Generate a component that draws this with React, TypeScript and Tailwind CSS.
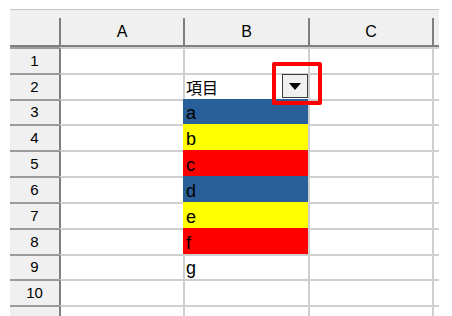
import React from 'react';

const rows = [
  { n: 1, h: 'h-[26px]', text: '', bg: '' },
  { n: 2, h: 'h-[26px]', text: '項目', bg: '' },
  { n: 3, h: 'h-[25px]', text: 'a', bg: 'bg-[#2a6099] border-[#2a6099]' },
  { n: 4, h: 'h-[26px]', text: 'b', bg: 'bg-[#ffff00] border-[#ffff00]' },
  { n: 5, h: 'h-[26px]', text: 'c', bg: 'bg-[#ff0000] border-[#ff0000]' },
  { n: 6, h: 'h-[26px]', text: 'd', bg: 'bg-[#2a6099] border-[#2a6099]' },
  { n: 7, h: 'h-[26px]', text: 'e', bg: 'bg-[#ffff00] border-[#ffff00]' },
  { n: 8, h: 'h-[26px]', text: 'f', bg: 'bg-[#ff0000] border-[#ff0000]' },
  { n: 9, h: 'h-[25px]', text: 'g', bg: '' },
  { n: 10, h: 'h-[26px]', text: '', bg: '' },
  { n: 11, h: 'h-[26px]', text: '', bg: '' },
];

function ColHeader({ label, width }: { label: string; width: string }) {
  return (
    <div className={`flex h-full ${width}`}>
      <div className="w-[2px] self-end h-[27px] bg-[#7f7f7f]" />
      <div className="flex-1 flex items-center justify-center pt-[8px]">{label}</div>
    </div>
  );
}

// autofilter dropdown with the red highlight frame drawn over it
function FilterButton() {
  return (
    <>
      <div className="absolute right-0 top-[-1px] z-10 flex items-center justify-center w-[26px] h-[24px] border border-[#3c3c3c] bg-[#f0f0f0]">
        <svg width="12" height="7" viewBox="0 0 12 7">
          <path d="M0 0h12L6 7z" fill="#000" />
        </svg>
      </div>
      <div className="absolute left-[87px] top-[-13px] z-20 w-[50px] h-[43px] border-[4px] border-[#ff0000] rounded-[2px]" />
    </>
  );
}

export default function App() {
  return (
    <div className="w-[452px] h-[316px] overflow-hidden bg-white pt-[9px] pl-[10px] font-['Liberation_Sans',Arial,sans-serif] text-black">
      <div className="w-[429px]">
        <div className="flex h-[38px] bg-[#f0f0f0] border-t border-t-[#c4c4c4] border-b-2 border-b-[#7f7f7f] text-[16px]">
          <div className="w-[49px]" />
          <ColHeader label="A" width="w-[124px]" />
          <ColHeader label="B" width="w-[125px]" />
          <ColHeader label="C" width="w-[124px]" />
          <ColHeader label="" width="w-[7px]" />
        </div>
        {rows.map((r) => (
          <div key={r.n} className={`flex ${r.h}`}>
            <div className={`w-[49px] flex items-center justify-center bg-[#f0f0f0] border-t-2 border-t-[#9a9a9a] text-[15px] ${r.n === 1 ? 'border-t-0' : ''}`}>
              {r.n < 11 ? r.n : ''}
            </div>
            <div className="w-[124px] border-l-2 border-l-[#7f7f7f] border-t-2 border-t-[#cfcfcf]" />
            <div
              className={`relative w-[125px] border-l-2 border-t-2 flex pl-[1px] ${
                r.bg ? r.bg : 'border-[#cfcfcf]'
              } ${r.text === '項目' ? "items-center text-[16px] font-['Noto_Sans_CJK_JP',sans-serif]" : 'items-end text-[18px] leading-[22px]'}`}
            >
              <span>{r.text}</span>
              {r.n === 2 && <FilterButton />}
            </div>
            <div className="w-[124px] border-l-2 border-t-2 border-[#cfcfcf]" />
            <div className="w-[7px] border-l-2 border-t-2 border-[#cfcfcf]" />
          </div>
        ))}
      </div>
    </div>
  );
}
